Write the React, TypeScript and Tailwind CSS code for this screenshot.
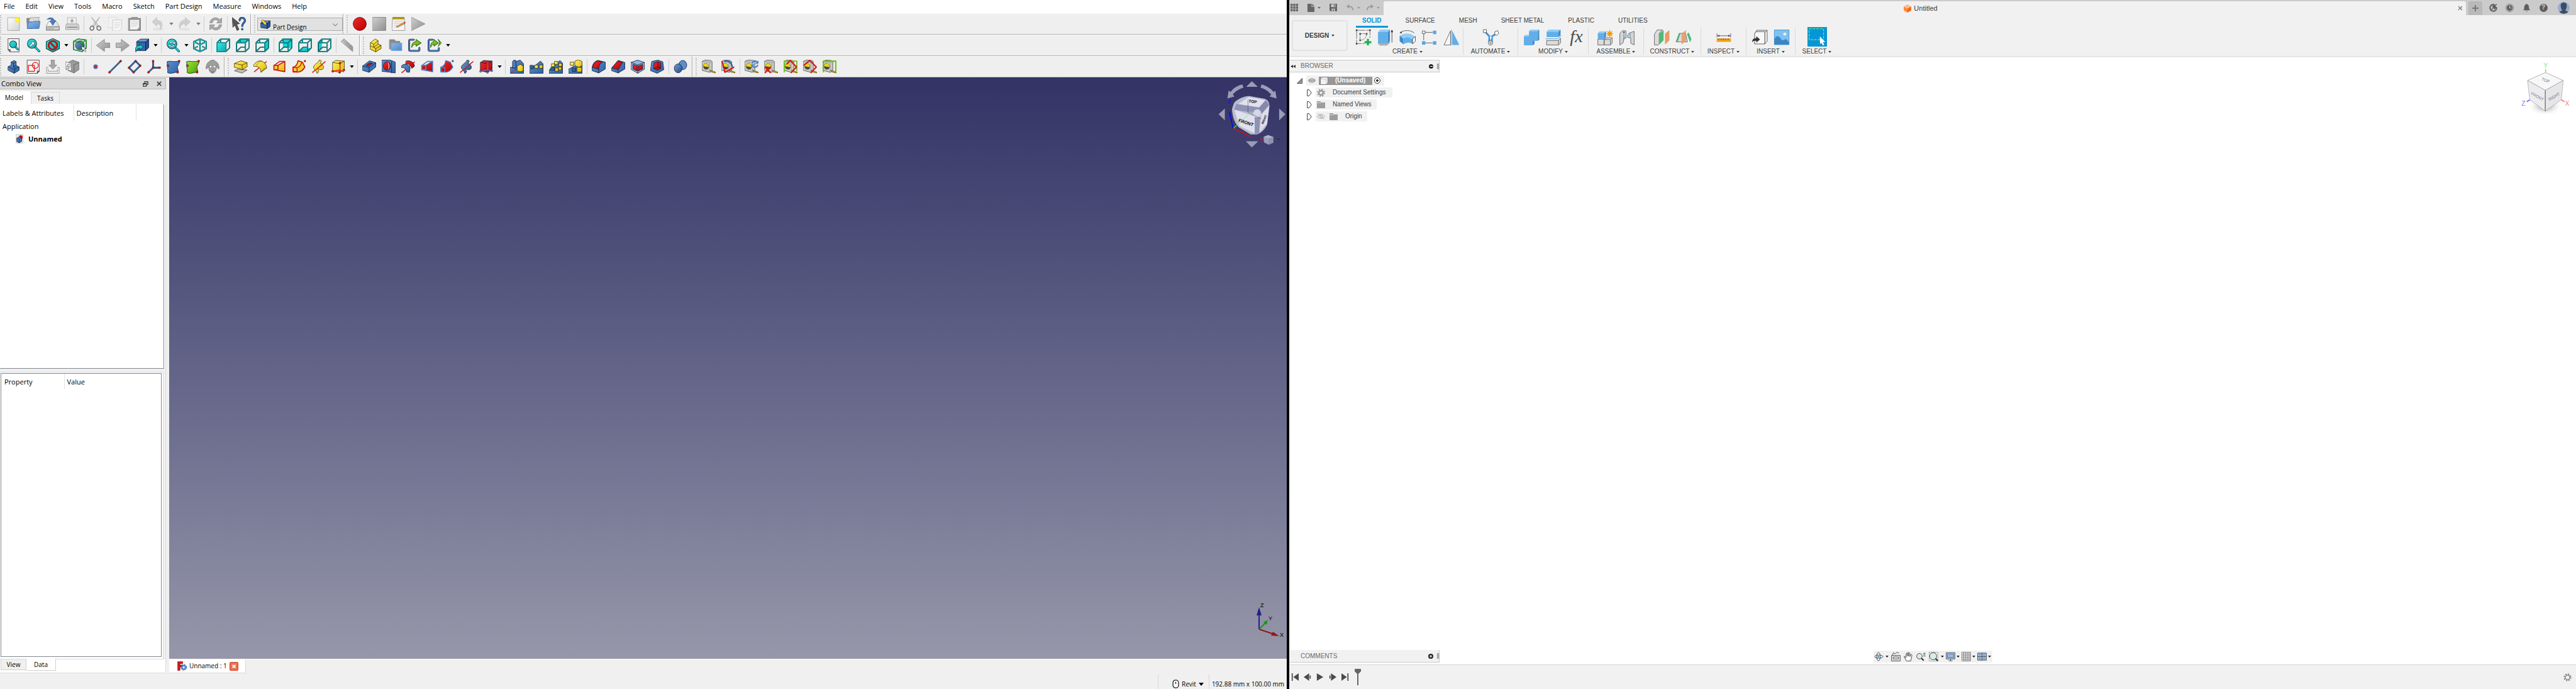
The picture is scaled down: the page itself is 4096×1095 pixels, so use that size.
import React from "react";

type Kids = { children?: React.ReactNode };
type Pt = string;

/* ---------- shared drawing helpers ---------- */

const INK = "#0b1a2e";

function Gradients() {
  const g = (id: string, a: string, b: string) => (
    <linearGradient id={id} x1="0" y1="0" x2="1" y2="1">
      <stop offset="0" stopColor={a} />
      <stop offset="1" stopColor={b} />
    </linearGradient>
  );
  return (
    <svg className="absolute size-0" aria-hidden="true">
      <defs>
        {g("blue", "#729fcf", "#204a87")}
        {g("sky", "#5b8fd0", "#2d62a8")}
        {g("yellow", "#fff36b", "#e0b800")}
        {g("red", "#f02a2a", "#b80000")}
        {g("gray", "#cfcfcf", "#8f8f8f")}
        {g("paper", "#fdfdfd", "#d2d2d2")}
        {g("teal", "#34e8ea", "#12a9ab")}
        {g("green", "#9be83a", "#4e9a06")}
        {g("folder", "#8db8ea", "#4d86c8")}
        <radialGradient id="glow">
          <stop offset="0" stopColor="#ffffc0" />
          <stop offset="0.4" stopColor="#fff200" />
          <stop offset="1" stopColor="#fff200" stopOpacity="0" />
        </radialGradient>
        <radialGradient id="shade">
          <stop offset="0" stopColor="#777" stopOpacity="0.8" />
          <stop offset="1" stopColor="#fff" stopOpacity="0" />
        </radialGradient>
      </defs>
    </svg>
  );
}

function Ic({ children }: Kids) {
  return (
    <svg viewBox="0 0 84 84" className="size-[22px] shrink-0" strokeLinejoin="round" aria-hidden="true">
      {children}
    </svg>
  );
}

function P({ d, f = "none", s = INK, w = 3 }: { d: string; f?: string; s?: string; w?: number }) {
  return <path d={d} fill={f} stroke={s} strokeWidth={w} strokeLinecap="round" />;
}

function Two({ d, s, w = 5, o = INK, e = 4 }: { d: string; s: string; w?: number; o?: string; e?: number }) {
  return (
    <g fill="none" strokeLinecap="round">
      <path d={d} stroke={o} strokeWidth={w + e} />
      <path d={d} stroke={s} strokeWidth={w} />
    </g>
  );
}

function Dot({ x, y, r = 6, f = "#e01b1b" }: { x: number; y: number; r?: number; f?: string }) {
  return <circle cx={x} cy={y} r={r} fill={f} stroke="#5a0000" strokeWidth={2} />;
}

/* ---------- FreeCAD icons ---------- */

const icons: Record<string, React.ReactNode> = {
  new: (
    <>
      <P d="M6 4H76V82H6Z" f="url(#paper)" s="#9c9c9c" />
      <circle cx="64" cy="18" r="20" fill="url(#glow)" />
    </>
  ),
  open: (
    <>
      <P d="M2 8H30L34 14V70H8Z" f="#8a8a8a" s="#777" />
      <P d="M14 26L22 4L78 2L72 34Z" f="#e8e8e8" s="#8a8a8a" />
      <P d="M22 12L70 10M20 20L70 18" s="#aaa" w={2} />
      <P d="M14 30L36 32L42 26H84L76 70H6Z" f="url(#folder)" s="#2f66a8" />
    </>
  ),
  save: (
    <>
      <P d="M18 28H64L82 58V80H2V58Z" f="url(#paper)" s="#8a8a8a" />
      <P d="M2 58H82V80H2Z" f="#b8b8b8" s="#808080" />
      <P d="M50 70H76" s="#e8e8e8" w={5} />
      <P d="M8 14C22 0 48 2 50 22H60L42 50L24 24H36C34 12 22 10 8 14Z" f="#4d80c0" s="#27518c" />
    </>
  ),
  print: (
    <>
      <P d="M14 4H66V44H14Z" f="#efefef" s="#aaa" />
      <P d="M40 34V18M32 26L40 14L48 26Z" f="#a8a8a8" s="#a8a8a8" w={6} />
      <P d="M8 42H76L82 56V76H2V56Z" f="#d5d5d5" s="#8a8a8a" />
      <P d="M12 62H72" s="#888" w={5} />
    </>
  ),
  cut: (
    <>
      <P d="M18 2L50 58L56 50ZM66 2L32 58L26 50Z" f="#e4e4e4" s="#a0a0a0" />
      <ellipse cx="20" cy="68" rx="11" ry="13" fill="none" stroke="#7c7c7c" strokeWidth="7" transform="rotate(30 20 68)" />
      <ellipse cx="62" cy="68" rx="11" ry="13" fill="none" stroke="#7c7c7c" strokeWidth="7" transform="rotate(-30 62 68)" />
    </>
  ),
  copy: (
    <>
      <P d="M2 2H56V64H2Z" f="#f2f2f2" s="#d4d4d4" />
      <P d="M28 18H82V70L68 84H28Z" f="#f6f6f6" s="#c4c4c4" />
      <P d="M38 34H72M38 44H72M38 54H72M38 64H60" s="#cfcfcf" w={3} />
    </>
  ),
  paste: (
    <>
      <P d="M6 8H78V84H6Z" f="#8f8f8f" s="#7c7c7c" />
      <P d="M14 16H70V62L58 76H14Z" f="#f4f4f4" s="#b0b0b0" w={2} />
      <P d="M26 0H58V14H26Z" f="#a0a0a0" s="#777" />
      <P d="M22 30H62M22 42H62M22 54H54" s="#b8b8b8" />
    </>
  ),
  undo: (
    <>
      <ellipse cx="44" cy="74" rx="34" ry="9" fill="#e2e2e2" />
      <P d="M36 4V20C70 20 78 50 56 76C62 52 54 42 36 42V56L8 30Z" f="#cfcfcf" s="#c2c2c2" />
    </>
  ),
  redo: (
    <>
      <ellipse cx="40" cy="74" rx="34" ry="9" fill="#e2e2e2" />
      <P d="M44 4V18C12 20 4 44 10 70C18 50 26 40 44 42V56L74 30Z" f="#cfcfcf" s="#c2c2c2" />
    </>
  ),
  refresh: (
    <>
      <P d="M6 34C12 2 50 -4 66 16L78 6V36H48L58 26C44 10 24 18 22 34Z" f="#a9a9a9" s="#858585" />
      <P d="M78 48C72 82 34 88 18 68L6 78V48H36L26 58C40 72 60 64 62 48Z" f="#a9a9a9" s="#858585" />
    </>
  ),
  whats: (
    <>
      <P d="M2 4L46 40L28 44L42 76L30 82L18 50L6 62Z" f="#555753" s="#333" />
      <Two d="M46 20C46 -2 78 2 78 22C78 38 62 36 62 54" s="#3a6cb0" w={8} />
      <circle cx="62" cy="74" r="6" fill="#3a6cb0" stroke={INK} strokeWidth="2" />
    </>
  ),
  record: <circle cx="42" cy="42" r="40" fill="url(#red)" stroke="#6b0000" strokeWidth="3" />,
  stop: <P d="M2 2H82V82H2Z" f="url(#gray)" s="#7c7c7c" />,
  macro: (
    <>
      <P d="M6 6H76L80 82H2Z" f="#f4f4f4" s="#888" />
      <P d="M8 2H74V12H8Z" f="#c4a000" s="#8f7500" />
      <P d="M14 26H68M14 38H60M14 50H44M14 62H40" s="#b5b5b5" />
      <P d="M28 58L74 32L80 40L36 62Z" f="#e39a3b" s="#7a4b10" w={2} />
      <circle cx="78" cy="34" r="5" fill="#e0362b" />
    </>
  ),
  play: <P d="M2 2L84 42L2 82Z" f="url(#gray)" s="#8a8a8a" />,

  fitAll: (
    <>
      <P d="M8 2H74V82H20L8 70Z" f="#f3f3f3" s="#333" />
      <P d="M8 68H20V82Z" f="#888" s="#333" />
      <Two d="M50 50L66 66" s="#16d0d2" w={8} />
      <circle cx="38" cy="36" r="21" fill="url(#teal)" stroke="#0b3a3c" strokeWidth="4" />
    </>
  ),
  fitSel: (
    <>
      <Two d="M54 54L78 78" s="#16d0d2" w={9} />
      <circle cx="34" cy="32" r="28" fill="url(#teal)" stroke="#0b4a4c" strokeWidth="4" />
      <P d="M18 46L34 30L26 22H48V44L40 36L24 52Z" f="#fff" w={2} />
    </>
  ),
  drawStyle: (
    <>
      <P d="M42 1L82 20V62L42 83L2 62V20Z" f="url(#teal)" s="#06383a" w={4} />
      <circle cx="42" cy="42" r="26" fill="none" stroke="#5a0000" strokeWidth="10" />
      <circle cx="42" cy="42" r="26" fill="none" stroke="#e01616" strokeWidth="7" />
      <path d="M25 25L59 59" stroke="#5a0000" strokeWidth="10" />
      <path d="M23 23L61 61" stroke="#e01616" strokeWidth="7" />
    </>
  ),
  bbox: (
    <>
      <circle cx="42" cy="42" r="28" fill="url(#blue)" stroke={INK} strokeWidth="2" />
      <Two d="M4 18L56 26V80L4 68ZM56 26L80 10V58L56 80M4 18L32 4L80 10" s="#22d422" w={4} e={2} />
      <P d="M52 48L56 74L64 68L74 82L80 78L70 64L80 62Z" f="#f4f4f4" w={2} />
    </>
  ),
  left: <P d="M2 42L50 6V28H82V56H50V78Z" f="url(#gray)" s="#7c7c7c" />,
  right: <P d="M82 42L34 6V28H2V56H34V78Z" f="url(#gray)" s="#7c7c7c" />,
  link: (
    <>
      <P d="M10 18L34 4H82L66 22H10Z" f="#6c98d4" />
      <P d="M10 22H64V74H10Z" f="#3567ae" />
      <P d="M64 22L82 4V56L64 74Z" f="#24508f" />
      <P d="M4 82C-4 54 10 40 28 44V34L48 52L28 70V60C18 58 10 64 4 82Z" f="#1fc9cb" s="#06383a" />
    </>
  ),
  sync: (
    <>
      <Two d="M54 54L78 78" s="#16d0d2" w={9} />
      <circle cx="36" cy="34" r="30" fill="url(#teal)" stroke="#0b4a4c" strokeWidth="4" />
      <P d="M20 30C24 16 44 14 50 24L56 18V34H40L46 28C40 24 32 24 28 30ZM52 40C48 54 28 56 22 46L16 52V38H32L26 42C32 48 40 46 44 40Z" f="#fff" w={2} />
    </>
  ),
  iso: <Two d="M42 4L80 20V62L42 80L4 62V20ZM4 20L42 38L80 20M42 38V80M42 4V28M14 56L26 50M70 56L58 50" s="#16d0d2" w={4} o="#06383a" />,
  ruler: (
    <>
      <P d="M2 18L18 2L72 50V80L60 70Z" f="url(#gray)" s="#888" />
      <P d="M20 8L14 16M30 16L24 24M40 24L32 34M50 34L42 42M60 42L52 52" s="#555" w={2} />
    </>
  ),
  part: (
    <>
      <P d="M8 26L36 4L54 14V34L72 42V62L40 82L8 66Z" f="url(#yellow)" s="#3a3000" />
      <P d="M8 26L28 36L54 14M28 36V54L54 34M28 54L40 62L72 42M40 62V82M8 46L28 54" s="#3a3000" />
    </>
  ),
  group: (
    <>
      <P d="M6 8H36L42 18H68V64H6Z" f="#8c8c8c" s="#777" />
      <P d="M16 28H80V74H16Z" f="url(#folder)" s="#6a9fdf" />
    </>
  ),
  linkMake: (
    <>
      <Two d="M34 8H12Q6 8 6 16V68Q6 76 14 76H60Q68 76 68 68V58" s="#4b7dc0" w={7} />
      <P d="M22 54C20 26 36 20 48 20V6L80 28L48 48V36C36 36 28 40 22 54Z" f="url(#green)" s="#173800" />
    </>
  ),
  linkMore: (
    <>
      <Two d="M30 8H12Q6 8 6 16V68Q6 76 14 76H60Q68 76 68 68V60" s="#4b7dc0" w={7} />
      <P d="M18 54C16 26 30 20 38 20V6L66 28L38 48V36C30 36 24 40 18 54Z" f="url(#green)" s="#173800" />
      <P d="M64 6L84 28L64 48L72 28Z" f="#7ad41c" s="#173800" />
    </>
  ),

  body: (
    <>
      <P d="M8 42L26 32L26 14L44 4L56 12V34L74 44V64L44 82L8 64Z" f="url(#sky)" />
      <P d="M26 14L40 22L56 12M40 22V44L56 34M40 44L50 52L74 44M50 52L44 82M8 42L44 60" />
    </>
  ),
  sketch: (
    <>
      <P d="M6 2H78V68L66 82H6Z" f="#f2f2f2" s="#333" />
      <P d="M78 68H66V82Z" f="#777" s="#333" />
      <circle cx="54" cy="34" r="18" fill="none" stroke="#e81616" strokeWidth="5" />
      <P d="M12 34H48V70H12Z" s="#e81616" w={5} />
    </>
  ),
  importIc: (
    <>
      <P d="M14 46H4V82H80V46H70M14 58V70H70V58" s="#9c9c9c" w={4} />
      <P d="M32 2H52V32H66L42 56L18 32H32Z" f="#a8a8a8" s="#7d7d7d" />
    </>
  ),
  map: (
    <>
      <P d="M18 16L44 2L84 16V58L52 80L18 66Z" f="#9b9b9b" s="#5f5f5f" />
      <P d="M52 30L84 16M52 30V80" s="#5f5f5f" />
      <P d="M2 12L36 22V68L2 58Z" f="#ededed" s="#777" />
      <circle cx="22" cy="36" r="9" fill="none" stroke="#999" strokeWidth="4" />
      <P d="M8 38H20V54H8Z" s="#999" w={4} />
    </>
  ),
  point: (
    <>
      <circle cx="42" cy="42" r="14" fill="#4b7dc0" />
      <circle cx="42" cy="42" r="8" fill="#e81616" />
    </>
  ),
  line: (
    <>
      <Two d="M8 76L76 8" s="#3f74bb" w={6} />
      <Dot x={8} y={76} />
      <Dot x={76} y={8} />
    </>
  ),
  plane: (
    <>
      <Two d="M48 8L76 36L36 76L8 48Z" s="#3f74bb" w={6} />
      <Dot x={48} y={8} />
      <Dot x={76} y={36} />
      <Dot x={36} y={76} />
      <Dot x={8} y={48} />
    </>
  ),
  cs: (
    <>
      <Two d="M36 8V48H76M36 48L8 76" s="#3f74bb" w={6} />
      <Dot x={36} y={8} />
      <Dot x={76} y={48} />
      <Dot x={8} y={76} />
      <Dot x={36} y={48} />
    </>
  ),
  binder: (
    <>
      <P d="M4 12C20 2 40 18 76 6C84 24 60 40 66 50L72 76C50 72 28 90 6 78C10 60 0 40 4 12Z" f="url(#sky)" />
      <Dot x={76} y={8} />
      <Dot x={8} y={36} />
      <Dot x={66} y={76} />
    </>
  ),
  subBinder: (
    <>
      <P d="M4 12C20 2 40 18 76 6C84 24 60 40 66 50L72 76C50 72 28 90 6 78C10 60 0 40 4 12Z" f="url(#green)" />
      <Dot x={76} y={8} />
      <Dot x={8} y={36} />
      <Dot x={66} y={76} />
    </>
  ),
  clone: (
    <>
      <P d="M22 12C28 -2 56 -2 62 12C74 14 82 34 82 54C72 58 68 42 64 34C68 54 62 80 42 82C22 80 16 54 20 34C16 42 12 58 2 54C2 34 10 14 22 12Z" f="#9e9e9e" s="#777" />
      <circle cx="30" cy="42" r="5" fill="#fff" />
      <circle cx="54" cy="42" r="5" fill="#fff" />
      <P d="M34 70L42 76L50 70" s="#555" />
    </>
  ),
  pad: (
    <>
      <P d="M4 66L28 56L80 62L50 80Z" f="#bdbdbd" s="#444" />
      <P d="M4 22L42 6L80 18V42L50 60L4 46Z" f="url(#yellow)" s="#3a3000" />
      <P d="M4 22L50 32L80 18M50 32V60" s="#3a3000" />
    </>
  ),
  revolution: (
    <>
      <path d="M4 74L80 10" stroke="#e01b1b" strokeWidth="6" />
      <P d="M2 30C20 8 34 4 50 8C66 14 80 30 80 50L46 76C44 50 28 36 2 40Z" f="url(#yellow)" s="#3a3000" />
      <P d="M50 8C30 12 24 20 20 34M46 76C52 60 64 54 80 50" s="#3a3000" w={2} />
    </>
  ),
  loft: (
    <>
      <P d="M30 34L72 10V72L8 60Z" f="url(#yellow)" s="#c01010" w={6} />
      <P d="M6 34H30V60H6Z" f="#f3dc2a" s="#e01b1b" w={7} />
      <P d="M8 34L40 10H72" s="#e01b1b" w={6} />
    </>
  ),
  pipe: (
    <>
      <P d="M2 46C28 40 30 20 34 6L60 14L76 44C60 70 40 76 28 74L4 70Z" f="url(#yellow)" s="#c01010" w={6} />
      <P d="M4 48H28V74H4ZM28 48C44 44 54 30 56 14" s="#e01b1b" w={6} />
      <Dot x={76} y={8} r={5} />
    </>
  ),
  helix: (
    <>
      <path d="M2 78L82 10" stroke="#e01b1b" strokeWidth="6" />
      <P d="M44 4C58 0 62 8 50 22C74 30 78 56 58 60C46 62 40 54 34 54C44 66 44 78 30 82C26 60 12 62 10 46C10 28 36 22 44 4Z" f="url(#yellow)" s="#3a3000" />
      <path d="M22 62L62 28" stroke="#e01b1b" strokeWidth="6" />
    </>
  ),
  addPrim: (
    <>
      <P d="M8 16L26 4L78 8V58L52 76L8 68Z" f="url(#yellow)" s="#3a3000" />
      <P d="M8 16L52 24L78 8M52 24V76" s="#3a3000" />
      <path d="M52 20V62L8 70M52 62L76 74" stroke="#e01b1b" strokeWidth="5" fill="none" />
      <Dot x={52} y={20} />
      <Dot x={8} y={70} />
      <Dot x={50} y={76} />
      <Dot x={76} y={62} />
    </>
  ),
  pocket: (
    <>
      <P d="M2 38L44 6L82 18V44L42 76L2 64Z" f="url(#sky)" />
      <P d="M2 38L42 48L82 18M42 48V76" />
      <P d="M24 34L46 18L62 22L40 38Z" f="#d01010" />
    </>
  ),
  hole: (
    <>
      <P d="M2 2H52L82 14V80L52 76L2 70Z" f="url(#sky)" />
      <P d="M60 10V80" />
      <ellipse cx="32" cy="38" rx="22" ry="26" fill="url(#red)" stroke={INK} strokeWidth="3" />
      <path d="M34 14C48 20 50 52 36 62C44 50 44 26 34 14Z" fill="#fff" />
    </>
  ),
  groove: (
    <>
      <path d="M2 80L82 12" stroke="#e01b1b" strokeWidth="6" />
      <P d="M30 8C56 0 82 20 80 40L64 52C56 30 44 24 28 26Z" f="url(#red)" />
      <P d="M2 36C24 18 46 30 54 50L50 76L32 74C30 56 20 46 2 48Z" f="url(#sky)" />
    </>
  ),
  subLoft: (
    <>
      <P d="M30 34L72 10V72L8 60Z" f="url(#red)" s="#3f74bb" w={6} />
      <P d="M6 34H30V60H6Z" f="#d01010" s="#4b83cc" w={7} />
      <P d="M8 34L40 10H72" s="#4b83cc" w={6} />
    </>
  ),
  subPipe: (
    <>
      <P d="M2 46C28 40 30 20 34 6L60 14L76 44C60 70 40 76 28 74L4 70Z" f="url(#red)" s="#3f74bb" w={6} />
      <P d="M4 48H28V74H4Z" f="#c01010" s="#4b83cc" w={6} />
      <Dot x={76} y={8} r={5} f="#3f74bb" />
    </>
  ),
  subHelix: (
    <>
      <path d="M2 78L82 10" stroke="#e01b1b" strokeWidth="6" />
      <P d="M44 4C58 0 62 8 50 22C74 30 78 56 58 60C46 62 40 54 34 54C44 66 44 78 30 82C26 60 12 62 10 46C10 28 36 22 44 4Z" f="url(#blue)" />
      <path d="M22 62L62 28" stroke="#e01b1b" strokeWidth="6" />
    </>
  ),
  subPrim: (
    <>
      <P d="M8 16L26 4L78 8V58L52 76L8 68Z" f="url(#red)" />
      <P d="M8 16L52 24L78 8M52 24V76" />
      <path d="M52 20V62L8 70M52 62L76 70" stroke="#4b83cc" strokeWidth="5" fill="none" />
      <Dot x={52} y={20} f="#5b8fd0" />
      <Dot x={8} y={70} f="#5b8fd0" />
      <Dot x={50} y={76} f="#5b8fd0" />
      <Dot x={76} y={66} f="#5b8fd0" />
    </>
  ),
  mirrored: (
    <>
      <P d="M2 46H20V10C24 0 34 0 38 10L62 2L82 24V82H2Z" f="url(#sky)" />
      <path d="M8 78L80 20" stroke="#e01b1b" strokeWidth="6" strokeDasharray="14 8" />
      <P d="M16 10C20 0 32 0 36 10V50H16Z" f="#4b7dc0" />
      <P d="M44 38L62 28L80 38V66C70 74 54 74 44 66Z" f="url(#yellow)" s="#3a3000" />
    </>
  ),
  linear: (
    <>
      <P d="M2 60L40 30L66 8L82 24V82H2Z" f="url(#sky)" />
      <P d="M4 34H24V54H4Z" f="#3465a4" />
      <P d="M32 32H52V52H32ZM60 32H80V52H60Z" f="url(#yellow)" s="#3a3000" />
    </>
  ),
  polar: (
    <>
      <P d="M2 60L40 30L66 4L82 20V82H2Z" f="url(#sky)" />
      <P d="M34 10H54V28H34ZM16 24H34V42H16ZM60 22H78V40H60ZM58 44H76V62H58ZM38 50H56V70H38Z" f="url(#yellow)" s="#3a3000" />
      <P d="M12 46H32V64H12Z" f="#3465a4" />
    </>
  ),
  multi: (
    <>
      <P d="M2 56L30 40L82 30V82H2Z" f="url(#sky)" />
      <P d="M40 8L60 0L82 10V36L62 46L40 36Z" f="url(#yellow)" s="#3a3000" />
      <P d="M12 14H32V34H12ZM52 46H80V74H52Z" f="url(#yellow)" s="#3a3000" />
      <P d="M24 50H44V70H24Z" f="#3465a4" />
    </>
  ),
  fillet: (
    <>
      <P d="M2 50C4 24 18 8 38 4L82 14V56L42 80L2 66Z" f="url(#sky)" />
      <P d="M4 46C8 22 20 10 38 6L66 14C50 22 42 34 42 56Z" f="url(#red)" />
      <P d="M42 56L42 80" />
    </>
  ),
  chamfer: (
    <>
      <P d="M2 50L42 4L82 16V56L42 80L2 66Z" f="url(#sky)" />
      <P d="M4 50L40 6L68 16L42 58Z" f="url(#red)" />
      <P d="M42 58V80" />
    </>
  ),
  draft: (
    <>
      <P d="M2 16L42 2L82 16V58L42 82L2 58Z" f="#8fb7e6" />
      <P d="M2 16L42 32L82 16M42 32V82" />
      <P d="M14 28L38 38V68L14 56Z M46 38L72 28V56L46 68Z" f="url(#red)" />
    </>
  ),
  thickness: (
    <>
      <P d="M10 10L46 2L76 12L82 60L42 82L2 66Z" f="url(#sky)" />
      <P d="M24 18L46 12L64 18V52L44 64L22 54Z" f="url(#red)" />
      <P d="M46 12V44L22 54M46 44L64 52" />
    </>
  ),
  boolean: (
    <>
      <ellipse cx="56" cy="32" rx="24" ry="28" fill="#5b8fd0" stroke={INK} strokeWidth="3" />
      <ellipse cx="28" cy="52" rx="24" ry="27" fill="url(#blue)" stroke={INK} strokeWidth="3" />
    </>
  ),
};

function CubeWire({ face }: { face: Pt }) {
  return (
    <>
      <path d={face} fill="#16cfd1" />
      <Two d="M4 26H58V80H4ZM26 4H80V58M4 26L26 4M58 26L80 4M58 80L80 58M26 4V24M30 54H56M8 76L26 58" s="#16cfd1" w={3} o="#06383a" />
    </>
  );
}
icons.front = (
  <>
    <CubeWire face="M4 26H58V80H4Z" />
    <path d="M6 28H56V78H6Z" fill="url(#teal)" />
  </>
);
icons.top = <CubeWire face="M4 26L26 4H80L58 26Z" />;
icons.rightV = <CubeWire face="M58 26L80 4V58L58 80Z" />;
icons.rear = <CubeWire face="M26 4H80V58H26Z" />;
icons.bottom = <CubeWire face="M4 80L26 58H80L58 80Z" />;
icons.leftV = <CubeWire face="M4 26L26 4V58L4 80Z" />;

function Tape({ children }: Kids) {
  return (
    <>
      <P d="M2 10L18 2L54 4L62 12V68L46 76L2 64Z" f="#c9ccc6" s="#444" />
      <P d="M46 16V76M2 10L46 16L62 12" s="#777" w={2} />
      <path d="M8 40C8 14 42 14 42 46Z" fill="#f5d60a" stroke="#444" strokeWidth="2" />
      <path d="M8 40L42 46C40 66 10 64 8 40Z" fill="#454742" />
      <P d="M50 64L82 74V80L58 74Z" f="#edd400" s="#4a3d00" />
      {children}
    </>
  );
}
icons.mLinear = <Tape />;
icons.mAngular = (
  <Tape>
    <path d="M4 8L22 76L78 44" stroke="#d91414" strokeWidth="8" fill="none" />
    <path d="M18 10C44 0 64 20 66 44" stroke="#2f62ad" strokeWidth="9" fill="none" />
  </Tape>
);
icons.mRefresh = (
  <Tape>
    <path d="M46 22C52 2 72 4 76 18M80 30C74 50 54 48 48 36" stroke="#4b83cc" strokeWidth="8" fill="none" />
    <path d="M84 4V24H64ZM42 44V28H60Z" fill="#4b83cc" />
  </Tape>
);
icons.mClear = (
  <Tape>
    <path d="M4 44L40 80M40 44L4 80" stroke="#d91414" strokeWidth="9" />
  </Tape>
);
icons.mAll = (
  <Tape>
    <path d="M4 76V8H80V68" stroke="#6cc513" strokeWidth="7" fill="none" />
    <path d="M18 28L40 4L78 44L44 80" stroke="#d91414" strokeWidth="8" fill="none" />
  </Tape>
);
icons.m3d = (
  <Tape>
    <path d="M4 34L40 4L80 44L46 80" stroke="#d91414" strokeWidth="8" fill="none" />
  </Tape>
);
icons.mDelta = (
  <Tape>
    <path d="M5 76V8H80V76" stroke="#6cc513" strokeWidth="8" fill="none" />
  </Tape>
);

/* ---------- FreeCAD toolbars ---------- */

function Tool({ name, label }: { name: string; label?: string }) {
  return (
    <button aria-label={label ?? name} className="flex h-full w-[31px] items-center justify-center">
      <Ic>{icons[name]}</Ic>
    </button>
  );
}
const Tools = ({ names }: { names: string[] }) => (
  <>
    {names.map((n) => (
      <Tool key={n} name={n} />
    ))}
  </>
);
const Sep = () => (
  <div className="flex h-6 w-[6px] justify-center">
    <div className="w-px bg-[#cdcdcd]" />
  </div>
);
const Arrow = ({ dim }: { dim?: boolean }) => (
  <button aria-label="More" className="flex h-full w-3 items-center justify-center">
    <svg viewBox="0 0 8 5" className="h-1 w-[7px]" aria-hidden="true">
      <path d="M0 0H8L4 5Z" fill={dim ? "#777" : "#000"} />
    </svg>
  </button>
);
const Handle = () => <div className="h-7 w-[6px] border-l-2 border-dotted border-[#c4c4c4]" />;
const Edge = () => (
  <div className="flex h-full w-[11px] items-center gap-1">
    <div className="h-full w-[2px] border-r border-l border-r-white border-l-[#a8a8a8]" />
    <div className="h-7 border-l-2 border-dotted border-[#c4c4c4]" />
  </div>
);
const Bar = ({ children }: Kids) => (
  <div className="flex h-[34px] items-center border-t border-b border-t-[#fafafa] border-b-[#b2b2b2] bg-[#efefef]">{children}</div>
);

function FreeCadBars() {
  return (
    <>
      <nav className="flex h-[21px] items-center gap-[17px] bg-white pl-[6px] text-[11px]">
        {["File", "Edit", "View", "Tools", "Macro", "Sketch", "Part Design", "Measure", "Windows", "Help"].map((m) => (
          <button key={m}>{m}</button>
        ))}
      </nav>
      <Bar>
        <Handle />
        <Tools names={["new", "open", "save", "print"]} />
        <Sep />
        <Tools names={["cut", "copy", "paste"]} />
        <Sep />
        <Tool name="undo" />
        <Arrow dim />
        <Tool name="redo" />
        <Arrow dim />
        <Sep />
        <Tool name="refresh" />
        <Sep />
        <Tool name="whats" label="What's this" />
        <div className="w-[3px]" />
        <Edge />
        <div className="relative h-[21px] w-[136px] border border-[#adadad] bg-[#e1e1e1]">
          <svg viewBox="0 0 60 56" className="pointer-events-none absolute top-[2px] left-1 h-[15px] w-4" aria-hidden="true">
            <P d="M4 20L20 8H58L44 22H4Z" f="#6c98d4" />
            <P d="M4 22H42V54L4 48Z" f="#3567ae" />
            <P d="M42 22L58 8V42L42 54Z" f="#24508f" />
            <P d="M6 6L16 2L36 22L34 32L24 30Z" f="#f2dc3a" s="#3a3000" w={2} />
          </svg>
          <select aria-label="Workbench" className="h-full w-full appearance-none bg-transparent pl-6 text-[10px] leading-4">
            <option>Part Design</option>
          </select>
          <svg viewBox="0 0 10 6" className="pointer-events-none absolute top-2 right-[7px] h-[5px] w-2" aria-hidden="true">
            <path d="M0.5 0.5L5 5L9.5 0.5" fill="none" stroke="#333" />
          </svg>
        </div>
        <Edge />
        <Tools names={["record", "stop", "macro", "play"]} />
      </Bar>
      <Bar>
        <Handle />
        <Tools names={["fitAll", "fitSel", "drawStyle"]} />
        <Arrow />
        <Tool name="bbox" />
        <Sep />
        <Tools names={["left", "right", "link"]} />
        <Arrow />
        <Sep />
        <Tool name="sync" />
        <Arrow />
        <Tool name="iso" />
        <Sep />
        <Tools names={["front", "top", "rightV"]} />
        <Sep />
        <Tools names={["rear", "bottom", "leftV"]} />
        <Sep />
        <Tool name="ruler" />
        <div className="w-[3px]" />
        <Edge />
        <Tools names={["part", "group", "linkMake", "linkMore"]} />
        <Arrow />
      </Bar>
      <Bar>
        <Handle />
        <Tools names={["body", "sketch", "importIc", "map"]} />
        <Sep />
        <Tools names={["point", "line", "plane", "cs", "binder", "subBinder", "clone"]} />
        <div className="w-[3px]" />
        <Edge />
        <Tools names={["pad", "revolution", "loft", "pipe", "helix", "addPrim"]} />
        <Arrow />
        <Sep />
        <Tools names={["pocket", "hole", "groove", "subLoft", "subPipe", "subHelix", "subPrim"]} />
        <Arrow />
        <Sep />
        <Tools names={["mirrored", "linear", "polar", "multi"]} />
        <Sep />
        <Tools names={["fillet", "chamfer", "draft", "thickness"]} />
        <Sep />
        <Tool name="boolean" />
        <div className="w-[3px]" />
        <Edge />
        <Tools names={["mLinear", "mAngular"]} />
        <Sep />
        <Tools names={["mRefresh", "mClear", "mAll", "m3d", "mDelta"]} />
      </Bar>
    </>
  );
}

function ComboView() {
  return (
    <aside className="flex w-[264px] shrink-0 flex-col text-[11px]">
      <div className="mt-px flex h-[18px] items-center border border-l-0 border-[#b8b8b8] bg-[#d9d9d9] pl-[2px]">
        <span className="flex-1">Combo View</span>
        <button aria-label="Float" className="flex w-[21px] justify-center">
          <svg viewBox="0 0 11 11" className="size-[9px]" aria-hidden="true">
            <path d="M3.5 3V1H10V6.500H8M3.500 1.500H10M1 4.500H7V10H1ZM1 5.500H7" fill="none" stroke="#333" strokeWidth="1.500" />
          </svg>
        </button>
        <button aria-label="Close" className="flex w-[21px] justify-center">
          <svg viewBox="0 0 10 10" className="size-2" aria-hidden="true">
            <path d="M1 1L9 9M9 1L1 9" stroke="#333" strokeWidth="2" />
          </svg>
        </button>
      </div>
      <div className="flex h-[23px] items-end pr-px text-[10px]">
        <button className="h-5 w-[49px] bg-white pr-1">Model</button>
        <button className="h-[19px] w-[46px] border border-b-0 border-[#d9d9d9] bg-[#f0f0f0]">Tasks</button>
      </div>
      <div className="flex min-h-0 flex-1 flex-col border-r border-b border-[#dcdcdc] bg-white">
        <div className="mt-px mr-[2px] h-[420px] border-r border-b border-[#828790] leading-none">
          <table className="w-[217px] table-fixed border-collapse text-left">
            <thead>
              <tr className="h-[26px]">
                <th className="w-[117px] border-r border-[#e2e2e2] pl-1 font-normal whitespace-nowrap">Labels &amp; Attributes</th>
                <th className="border-r border-[#e2e2e2] pl-1 font-normal">Description</th>
              </tr>
            </thead>
            <tbody>
              <tr className="h-[17px]">
                <td className="pl-1">Application</td>
                <td />
              </tr>
              <tr className="h-[22px]">
                <td className="pl-[25px] font-bold">
                  <div className="flex items-center gap-2">
                    <svg viewBox="0 0 48 56" className="h-[15px] w-3" aria-hidden="true">
                      <path d="M1 1H47V55H1Z" fill="#e8e8e8" stroke="#999" strokeWidth="2" />
                      <circle cx="32" cy="18" r="12" fill="#d91414" />
                      <P d="M8 24L22 16L38 22V44L22 54L8 46Z" f="url(#sky)" />
                      <P d="M8 24L22 30L38 22M22 30V54" w={2} />
                    </svg>
                    Unnamed
                  </div>
                </td>
                <td />
              </tr>
            </tbody>
          </table>
        </div>
        <div className="flex min-h-0 flex-1 flex-col bg-[#f0f0f0] pt-[5px] pr-[3px]">
          <div className="flex min-h-0 flex-1 flex-col border border-l-0 border-[#dcdcdc] bg-white p-px pr-[2px] pb-[3px]">
            <div className="flex-1 border border-[#828790]">
              <table className="w-full table-fixed border-collapse text-left leading-none">
                <thead>
                  <tr className="h-[24px]">
                    <th className="w-[100px] border-r border-[#e2e2e2] pl-[5px] font-normal">Property</th>
                    <th className="pl-1 font-normal">Value</th>
                  </tr>
                </thead>
              </table>
            </div>
          </div>
        </div>
        <div className="flex h-[21px] items-start bg-white pl-px text-[10px] leading-none">
          <button className="h-[17px] w-[41px] border border-t-0 border-[#d0d0d0] bg-[#f0f0f0]">View</button>
          <button className="-mt-px h-[19px] w-[47px] border border-t-0 border-l-0 border-[#d0d0d0] bg-white">Data</button>
        </div>
      </div>
    </aside>
  );
}

function NavCube() {
  return (
    <svg viewBox="100 50 416 420" className="absolute top-[2px] right-0 h-[112px] w-[111px]" fontFamily="Liberation Sans, sans-serif" aria-label="Navigation cube">
      <g fill="#9c9cb8">
        <path d="M308 65L344 99H274Z" />
        <path d="M308 460L346 423H272Z" />
        <path d="M110 262L147 228V298Z" />
        <path d="M508 262L471 228V298Z" />
        <path d="M252 85C220 92 198 108 180 130L170 120L162 168L205 156L194 145C210 124 230 112 258 104Z" />
        <path d="M365 85C397 92 424 112 438 130L448 122L456 168L413 156L424 145C405 124 390 112 360 104Z" />
      </g>
      <path d="M200 200C210 175 270 150 300 155L385 170C405 178 414 195 413 215L400 320C390 350 360 378 335 383L300 382L230 340C200 310 190 260 190 230Z" fill="#b9bccf" />
      <path d="M222 205L290 160L390 178L352 222Z" fill="#e0e0ee" />
      <path d="M203 235L325 275V376L235 332Z" fill="#e0e0ee" />
      <path d="M365 262L412 212L398 318L352 372Z" fill="#dcdcec" />
      <path d="M215 200L352 222L365 262L203 235Z" fill="#8f93b3" />
      <path d="M352 222L390 178L412 205L365 262Z" fill="#8589ab" />
      <path d="M325 278L358 262L352 376L325 380Z" fill="#8f93b3" />
      <circle cx="340" cy="257" r="24" fill="#d5d7e8" />
      <path d="M285 175V250L365 290" stroke="#333377" strokeWidth="2" fill="none" />
      <text x="288" y="192" fontSize="24" fontWeight="bold" transform="rotate(6 288 192)">TOP</text>
      <text x="226" y="306" fontSize="27" fontWeight="bold" transform="rotate(18 226 306)">FRONT</text>
      <text x="376" y="322" fontSize="18" fontWeight="bold" transform="rotate(-66 376 322)">RIGHT</text>
      <path d="M196 345L174 246" stroke="#0000ff" strokeWidth="5" />
      <path d="M200 347L298 396" stroke="#ff0000" strokeWidth="5" />
      <path d="M200 345L215 330" stroke="#00ff00" strokeWidth="6" />
      <path d="M215 330L285 268" stroke="#7fe07f" strokeWidth="3" />
      <text x="166" y="195" fontSize="28" fill="#0000ff">Z</text>
      <text x="292" y="264" fontSize="26" fill="#7fe07f">Y</text>
      <text x="352" y="422" fontSize="28" fill="#ff0000">X</text>
      <path d="M378 397L405 387L436 398V432L408 444L380 430Z" fill="#9c9fba" />
      <path d="M378 397L408 406L436 398L405 387Z" fill="#b2b4cc" />
      <path d="M408 406V444L436 432V398Z" fill="#8c8fae" />
      <path d="M452 406H482L468 419Z" fill="#303054" />
    </svg>
  );
}

function Triad() {
  return (
    <svg viewBox="0 0 56 66" className="absolute right-1 bottom-[33px] h-[66px] w-[56px]" fontFamily="Liberation Sans, sans-serif" fontSize="9" aria-label="Axis cross">
      <path d="M16 52V22" stroke="#20208c" strokeWidth="2" />
      <path d="M16 17L20 30H12Z" fill="#20208c" />
      <path d="M16 52L26 42" stroke="#209020" strokeWidth="2" />
      <path d="M30 37L28 45L23 41Z" fill="#209020" />
      <path d="M16 52L40 60" stroke="#901818" strokeWidth="2" />
      <path d="M48 63L35 62L38 56Z" fill="#901818" />
      <text x="18" y="17">Z</text>
      <text x="31" y="38">Y</text>
      <text x="49" y="64">X</text>
    </svg>
  );
}

function FreeCad() {
  return (
    <section className="flex min-w-0 flex-1 flex-col bg-[#f0f0f0] font-['Open_Sans',sans-serif] text-black">
      <FreeCadBars />
      <div className="flex min-h-0 flex-1">
        <ComboView />
        <div className="ml-[5px] flex min-w-0 flex-1 flex-col">
          <div className="relative flex-1 bg-linear-to-b from-[#333365] to-[#9797aa]">
            <NavCube />
            <Triad />
          </div>
          <div className="flex h-[23px] border-t border-white">
            <div className="flex w-[122px] items-center border-r border-b border-[#d9d9d9] bg-white pl-[13px] text-[10px]">
              <svg viewBox="0 0 56 56" className="size-[15px]" aria-hidden="true">
                <path d="M2 2H32V14H16V22H28V34H16V54H2Z" fill="#d01818" stroke="#7a0000" strokeWidth="2" />
                <circle cx="38" cy="36" r="12" fill="none" stroke="#1d3f73" strokeWidth="12" strokeDasharray="6 3.400" />
                <circle cx="38" cy="36" r="10" fill="none" stroke="#5b8fd0" strokeWidth="8" />
              </svg>
              <span className="ml-1">Unnamed : 1</span>
              <button aria-label="Close document" className="ml-1 flex size-[14px] items-center justify-center rounded-[2px] border border-[#d8402a] bg-[#e8734e]">
                <svg viewBox="0 0 10 10" className="size-2" aria-hidden="true">
                  <path d="M2 2L8 8M8 2L2 8" stroke="#fff" strokeWidth="2.500" />
                </svg>
              </button>
            </div>
          </div>
        </div>
      </div>
      <footer className="flex h-[25px] items-end justify-end text-[10px] leading-none">
        <div className="flex h-[23px] w-[81px] items-center justify-end border-l border-[#d7d7d7] pt-[7px] pr-2">
          <svg viewBox="0 0 12 16" className="h-[14px] w-[11px]" aria-hidden="true">
            <rect x="1" y="1" width="10" height="14" rx="4.500" fill="#fff" stroke="#222" strokeWidth="1.500" />
            <path d="M6 4V8" stroke="#222" strokeWidth="1.500" />
          </svg>
          <button title="Navigation style" className="ml-1 flex items-center gap-1">
            Revit
            <svg viewBox="0 0 8 5" className="h-[5px] w-2" aria-hidden="true">
              <path d="M0 0H8L4 5Z" />
            </svg>
          </button>
        </div>
        <div className="flex h-[23px] items-center border-l border-[#d7d7d7] pt-[7px] pr-1 pl-1 whitespace-nowrap">192.88 mm x 100.00 mm</div>
      </footer>
    </section>
  );
}

/* ---------- Fusion ---------- */

const Caret = ({ c = "#3c3c3c" }: { c?: string }) => (
  <svg viewBox="0 0 8 5" className="h-[3px] w-[5px]" aria-hidden="true">
    <path d="M0 0H8L4 5Z" fill={c} />
  </svg>
);

const R = ({ children }: Kids) => (
  <svg viewBox="0 0 96 96" className="size-[26px] overflow-visible" strokeLinejoin="round" aria-hidden="true">
    {children}
  </svg>
);

const fusion: Record<string, React.ReactNode> = {
  sketch: (
    <>
      <path d="M8 8H86V52M8 8V86H54" fill="none" stroke="#555" strokeWidth="3" strokeDasharray="50 6" />
      <path d="M28 28H66M28 28V66M66 30C66 50 50 66 32 66" fill="none" stroke="#555" strokeWidth="3" strokeDasharray="14 4" />
      <path d="M3 3h9v9h-9zM82 3h9v9h-9zM3 82h9v9h-9zM24 24h9v9h-9zM62 24h9v9h-9zM24 62h9v9h-9z" fill="#444" />
      <path d="M68 58H80V72H94V84H80V96H68V84H54V72H68Z" fill="#1fae4c" />
    </>
  ),
  extrude: (
    <>
      <path d="M4 88L16 98H56L74 82V74H4Z" fill="#b0b0b0" />
      <path d="M4 18L18 4H74L62 18Z" fill="#8fcdf7" />
      <path d="M4 18H62V84H4Z" fill="#62aee8" />
      <path d="M62 18L74 4V70L62 84Z" fill="#3e8ac8" />
      <path d="M86 80V14M81 18L86 6L91 18Z" stroke="#333" strokeWidth="3" fill="#333" />
    </>
  ),
  revolve: (
    <>
      <path d="M4 22C26 6 64 4 88 24" fill="none" stroke="#444" strokeWidth="3" />
      <path d="M2 24L14 14V26Z" fill="#333" />
      <path d="M2 40C30 20 66 22 94 46L80 62C60 46 40 46 24 56Z" fill="#8fcdf7" />
      <path d="M2 40L24 56V90L2 72Z" fill="#3e8ac8" />
      <path d="M24 56C40 46 60 46 78 62V88C62 76 40 78 24 90Z" fill="#62aee8" />
      <path d="M78 58L94 44V72L78 88Z" fill="#fff" stroke="#333" strokeWidth="3" />
    </>
  ),
  pattern: (
    <>
      <path d="M24 20H66M14 30V66M24 82H66" stroke="#444" strokeWidth="3" />
      <path d="M6 12H22V28H6Z" fill="#fff" stroke="#444" strokeWidth="3" />
      <path d="M68 10H88V30H68ZM4 72H24V92H4ZM68 72H88V92H68Z" fill="#53a8e8" />
    </>
  ),
  mirror: (
    <>
      <path d="M42 12V94H4Z" fill="#f6f6f6" stroke="#555" strokeWidth="3" />
      <path d="M47 4V96" stroke="#555" strokeWidth="2" />
      <path d="M52 10L94 94H52Z" fill="#62aee8" />
    </>
  ),
  automate: (
    <>
      <path d="M16 16L42 44L40 76H56L56 44L82 28" fill="none" stroke="#3e95dc" strokeWidth="11" />
      <path d="M42 46H56L50 62Z" fill="#fff" />
      <path d="M6 4H24V22H6Z" fill="#fff" stroke="#444" strokeWidth="3" />
      <path d="M74 16L90 10L96 26L84 38L72 30Z" fill="#fff" stroke="#444" strokeWidth="3" />
      <circle cx="48" cy="82" r="13" fill="#fff" stroke="#444" strokeWidth="3" />
      <circle cx="48" cy="82" r="5" fill="none" stroke="#444" strokeWidth="3" />
    </>
  ),
  presspull: (
    <>
      <path d="M34 14L42 4H94L86 14V58L94 48V62L84 70H66V88L56 96H4V44L12 36H34Z" fill="#62aee8" />
      <path d="M34 14L42 4H94L86 14ZM4 44L12 36H34V44Z" fill="#8fcdf7" />
      <path d="M86 14L94 4V62L86 70ZM58 70H66V88L56 96V72Z" fill="#3e8ac8" />
    </>
  ),
  split: (
    <>
      <path d="M8 16L20 4H90L78 16Z" fill="#8fcdf7" />
      <path d="M8 16H78V48H8Z" fill="#62aee8" />
      <path d="M78 16L90 4V36L78 48Z" fill="#3e8ac8" />
      <path d="M2 58H76L94 38" fill="none" stroke="#1b8fe0" strokeWidth="3" />
      <path d="M8 68H78V94H8ZM78 68L90 54V82L78 94" fill="#dcdcdc" stroke="#555" strokeWidth="3" />
    </>
  ),
  fx: (
    <text x="16" y="78" fontFamily="Liberation Serif, serif" fontStyle="italic" fontSize="104" fill="#4a4a4a">
      fx
    </text>
  ),
  assemble: (
    <>
      <path d="M6 60H42V94H6ZM46 62L56 52H90V84L80 94H44V62H80L90 52M80 62V94" fill="#dcdcdc" stroke="#555" strokeWidth="3" />
      <path d="M6 24L16 14H54L44 24Z" fill="#8fcdf7" />
      <path d="M6 24H44V60H6Z" fill="#62aee8" />
      <path d="M44 24L54 14V48L44 60Z" fill="#3e8ac8" />
      <path d="M76 2L81 18L94 10L86 23L98 28L86 33L94 46L81 38L76 54L71 38L58 46L66 33L54 28L66 23L58 10L71 18Z" fill="#f39c12" />
    </>
  ),
  joint: (
    <>
      <path d="M6 94V30C10 16 22 8 34 10L42 12V54H30L26 80Z" fill="#d6d6d6" stroke="#555" strokeWidth="3" />
      <path d="M90 94V14L62 24C52 30 50 40 52 50L70 52V84Z" fill="#d6d6d6" stroke="#555" strokeWidth="3" />
      <path d="M30 64V30M66 46V26" stroke="#1b8fe0" strokeWidth="4" />
      <circle cx="30" cy="20" r="5" fill="#555" />
    </>
  ),
  offsetPlane: (
    <>
      <path d="M6 30L22 6H54L34 26V88L28 94H6Z" fill="#dcdcdc" stroke="#555" strokeWidth="3" />
      <path d="M34 28L60 6V66L34 92Z" fill="#4dbb77" />
      <path d="M68 28L94 6V66L68 92Z" fill="#ea9a65" />
    </>
  ),
  midPlane: (
    <>
      <path d="M22 26L4 76H70L60 26Z" fill="#dcdcdc" stroke="#555" strokeWidth="3" />
      <path d="M22 26L4 76H14L30 26ZM78 20L94 60L86 78L68 30Z" fill="#4dbb77" />
      <path d="M36 28L62 6V68L36 92Z" fill="#ea9a65" fillOpacity="0.9" />
    </>
  ),
  measure: (
    <>
      <path d="M8 26V50M88 26V50M10 40H86" stroke="#444" strokeWidth="3" />
      <path d="M10 40L22 34V46ZM86 40L74 34V46Z" fill="#444" />
      <path d="M6 56H90V76H6Z" fill="#f5a31a" />
      <path d="M16 56V64M26 56V64M36 56V64M46 56V66M56 56V64M66 56V64M76 56V64" stroke="#5a3c00" strokeWidth="3" />
    </>
  ),
  insert: (
    <>
      <path d="M18 30L30 8H92L78 20V88L92 72V8" fill="#f4f4f4" stroke="#444" strokeWidth="3" />
      <path d="M18 28L28 16H78V88H18Z" fill="#f8f8f8" stroke="#444" strokeWidth="3" />
      <path d="M4 78C4 58 14 54 28 54V42L50 62L28 80V70C18 68 10 70 4 78Z" fill="#333" />
    </>
  ),
  image: (
    <>
      <path d="M5 6H91V92H5Z" fill="#7cc2f4" />
      <circle cx="66" cy="30" r="9" fill="#fdf3b5" />
      <path d="M5 60C20 30 34 44 46 62C58 76 66 54 76 62L91 78V92H5Z" fill="#3a87c4" />
      <path d="M5 6H91V92H5Z" fill="none" stroke="#3a87c4" strokeWidth="3" />
    </>
  ),
};

function Group({ label, names, w, last }: { label: string; names: string[]; w: string; last?: boolean }) {
  return (
    <div className={`flex h-[43px] flex-col items-center ${w} ${last ? "" : "border-r border-[#dadada]"}`}>
      <div className="flex h-[29px] items-center">
        {names.map((n) =>
          n === "select" ? (
            <button key={n} aria-label="Select" className="-mt-px flex h-[31px] w-[31px] bg-[#0696d7]">
              <svg viewBox="0 0 114 114" className="size-full" aria-hidden="true">
                <path d="M10 10H94V74H10Z" fill="none" stroke="#8dec5a" strokeWidth="4" strokeDasharray="14 7" />
                <path d="M72 54L104 88L90 88L98 104L90 108L82 92L74 100Z" fill="#fff" />
              </svg>
            </button>
          ) : (
            <button key={n} aria-label={n} className="flex w-[35px] justify-center">
              <R>{fusion[n]}</R>
            </button>
          ),
        )}
      </div>
      <button className="flex flex-1 items-center gap-[3px] pt-1 text-[10px] leading-none">
        {label}
        <Caret />
      </button>
    </div>
  );
}

const Ti = ({ children, w }: Kids & { w: string }) => (
  <button aria-label="Tool" className={`flex h-full items-center justify-center ${w}`}>
    {children}
  </button>
);
const S = ({ d, f = "#666", c = "size-3" }: { d: string; f?: string; c?: string }) => (
  <svg viewBox="0 0 14 14" className={c} aria-hidden="true">
    <path d={d} fill={f} fillRule="evenodd" />
  </svg>
);

function FusionTitle() {
  return (
    <header className="flex h-6 bg-[#cbcbcb]">
      <div className="flex w-[150px] items-center pl-px">
        <Ti w="w-[14px]">
          <S d="M0 0h4v4h-4zM5 0h4v4h-4zM10 0h4v4h-4zM0 5h4v4h-4zM5 5h4v4h-4zM10 5h4v4h-4zM0 10h4v4h-4zM5 10h4v4h-4zM10 10h4v4h-4z" />
        </Ti>
        <Ti w="ml-3 w-[14px]">
          <S d="M1 0H8V5H13V14H1ZM9 0L13 4H9Z" c="h-[13px] w-[13px]" />
        </Ti>
        <Ti w="w-3">
          <Caret c="#666" />
        </Ti>
        <Ti w="ml-[10px] w-[14px]">
          <S d="M0 0H14V14H2L0 12ZM3 1H11V6H3ZM4 9H10V14H8V10.500H6V14H4ZM8 2H10V5H8Z" />
        </Ti>
        <Ti w="ml-[14px] w-[12px]">
          <S d="M5 1L0 5L5 9V6C9 6 11 8 11 12H13C13 7 10 4 5 4Z" f="#999" />
        </Ti>
        <Ti w="w-[14px]">
          <Caret c="#999" />
        </Ti>
        <Ti w="ml-[5px] w-[12px]">
          <S d="M9 1L14 5L9 9V6C5 6 3 8 3 12H1C1 7 4 4 9 4Z" f="#999" />
        </Ti>
        <Ti w="w-[14px]">
          <Caret c="#999" />
        </Ti>
      </div>
      <div className="mt-[2px] flex flex-1 items-center rounded-t-[3px] bg-[#f1f1f1] text-[11px] leading-none text-[#3c3c3c]">
        <div className="flex flex-1 items-center justify-center gap-1">
          <svg viewBox="0 0 44 48" className="h-[13px] w-3" aria-hidden="true">
            <path d="M22 0L44 12L22 24L0 12Z" fill="#fdbb8c" />
            <path d="M0 12L22 24V48L0 36Z" fill="#ff8a3c" />
            <path d="M44 12L22 24V48L44 36Z" fill="#f26a0e" />
          </svg>
          <span>Untitled</span>
        </div>
        <button aria-label="Close tab" className="mr-[5px]">
          <svg viewBox="0 0 8 8" className="size-2" aria-hidden="true">
            <path d="M1 1L7 7M7 1L1 7" stroke="#777" strokeWidth="1.400" />
          </svg>
        </button>
      </div>
      <div className="flex items-center pr-[10px]">
        <button aria-label="New tab" className="mt-[2px] ml-1 flex h-[22px] w-[22px] items-center justify-center rounded-t-[3px] bg-[#b9b9b9]">
          <svg viewBox="0 0 12 12" className="size-[10px]" aria-hidden="true">
            <path d="M6 0V12M0 6H12" stroke="#777" strokeWidth="2.500" />
          </svg>
        </button>
        <Ti w="ml-1 w-[26px]">
          <svg viewBox="0 0 48 48" className="size-[13px]" aria-hidden="true">
            <circle cx="24" cy="24" r="19" fill="none" stroke="#5d5d5d" strokeWidth="8" strokeDasharray="100 20" transform="rotate(-10 24 24)" />
            <path d="M12 36L22 26M20 18L32 30L40 20L28 8ZM30 16L44 2" stroke="#5d5d5d" strokeWidth="5" fill="#5d5d5d" />
          </svg>
        </Ti>
        <Ti w="w-[27px]">
          <svg viewBox="0 0 48 48" className="size-[13px]" aria-hidden="true">
            <circle cx="24" cy="24" r="22" fill="none" stroke="#5d5d5d" strokeWidth="3" />
            <circle cx="24" cy="24" r="17" fill="#5d5d5d" />
            <path d="M24 12V25H36" fill="none" stroke="#ccc" strokeWidth="4" />
          </svg>
        </Ti>
        <Ti w="w-[27px]">
          <svg viewBox="0 0 48 48" className="size-[13px]" aria-hidden="true">
            <path d="M20 4a4 4 0 0 1 8 0C38 8 38 18 38 28L44 38H4L10 28C10 18 10 8 20 4ZM18 42H30Q24 50 18 42Z" fill="#5d5d5d" />
          </svg>
        </Ti>
        <Ti w="w-[26px]">
          <span className="flex size-[13px] items-center justify-center rounded-full bg-[#5d5d5d] text-[10px] leading-none font-bold text-[#d0d0d0]">?</span>
        </Ti>
        <button aria-label="Account" className="ml-[10px] size-[19px] overflow-hidden rounded-full">
          <svg viewBox="0 0 72 72" aria-hidden="true">
            <path d="M0 0H72V72H0Z" fill="#94aed0" />
            <path d="M36 4C52 4 56 16 54 28C52 44 46 46 46 52L66 62V72H6V62L26 52C26 46 20 44 18 28C16 16 20 4 36 4Z" fill="#3d4d66" />
          </svg>
        </button>
      </div>
    </header>
  );
}

function Ribbon() {
  return (
    <div className="flex h-[68px] border-b-2 border-[#f6f6f6] bg-[#f1f1f1] text-[10px] leading-none text-[#3c3c3c]">
      <div className="flex w-full border-b border-[#d9d9d9]">
        <button className="mt-2 ml-1 flex h-[49px] w-[89px] items-center justify-center gap-1 rounded-[4px] border-2 border-[#e2e2e2] font-bold">
          DESIGN
          <Caret />
        </button>
        <div className="ml-[7px]">
          <div className="ml-[6px] flex h-5 gap-[18px]">
            <button className="border-b-[3px] border-[#0696d7] px-[10px] font-bold text-[#0696d7]">SOLID</button>
            {["SURFACE", "MESH", "SHEET METAL", "PLASTIC", "UTILITIES"].map((t) => (
              <button key={t} className="px-[10px] pb-[3px]">
                {t}
              </button>
            ))}
          </div>
          <div className="flex">
            <Group label="CREATE" names={["sketch", "extrude", "revolve", "pattern", "mirror"]} w="w-[177px]" />
            <Group label="AUTOMATE" names={["automate"]} w="w-[87px]" />
            <Group label="MODIFY" names={["presspull", "split", "fx"]} w="w-[112px]" />
            <Group label="ASSEMBLE" names={["assemble", "joint"]} w="w-[88px]" />
            <Group label="CONSTRUCT" names={["offsetPlane", "midPlane"]} w="w-[91px]" />
            <Group label="INSPECT" names={["measure"]} w="w-[72px]" />
            <Group label="INSERT" names={["insert", "image"]} w="w-[78px]" />
            <Group label="SELECT" names={["select"]} w="w-[68px]" last />
          </div>
        </div>
      </div>
    </div>
  );
}

const Grip = () => <div className="ml-[6px] h-[9px] w-[3px] border-x border-[#777]" />;

function Expander() {
  return (
    <button aria-label="Expand" className="mr-[6px] ml-7 flex">
      <svg viewBox="0 0 28 40" className="h-[11px] w-2" aria-hidden="true">
        <path d="M2 2H12L26 20L12 38H2Z" fill="#fff" stroke="#333" strokeWidth="3.500" />
      </svg>
    </button>
  );
}
const Folder = () => (
  <svg viewBox="0 0 48 40" className="h-[11px] w-[13px]" aria-hidden="true">
    <path d="M0 0H22V6H48V40H0Z" fill="#9d9d9d" />
    <path d="M0 9H22L26 5" fill="none" stroke="#f1f1f1" strokeWidth="2.500" />
  </svg>
);

function Browser() {
  return (
    <div className="text-[10px] leading-none text-[#3c3c3c]">
      <div className="mt-[3px] flex h-5 w-[239px] items-center border border-l-0 border-[#c9c9c9] bg-[#f1f1f1] pl-[2px]">
        <button aria-label="Collapse">
          <svg viewBox="0 0 30 18" className="h-[5px] w-2" aria-hidden="true">
            <path d="M15 0V18L0 9ZM30 0V18L15 9Z" fill="#333" />
          </svg>
        </button>
        <span className="ml-2 flex-1 text-[#6a6a6a]">BROWSER</span>
        <button aria-label="Minimise" className="flex size-[7px] items-center justify-center rounded-full bg-[#222]">
          <span className="h-px w-1 bg-white" />
        </button>
        <Grip />
      </div>
      <ul className="flex flex-col gap-[3px] pt-[5px]">
        <li className="flex h-4 items-center">
          <svg viewBox="0 0 34 34" className="mr-[6px] ml-3 size-[9px]" aria-hidden="true">
            <path d="M32 2V32H2Z" fill="#999" stroke="#333" strokeWidth="3" />
          </svg>
          <div className="flex h-full items-center bg-[#f1f1f1] pl-[3px]">
            <svg viewBox="0 0 48 32" className="h-2 w-3" aria-hidden="true">
              <path d="M0 16C12 -4 36 -4 48 16C36 36 12 36 0 16Z" fill="#9d9d9d" />
              <circle cx="24" cy="16" r="9" fill="none" stroke="#f1f1f1" strokeWidth="3" />
            </svg>
            <div className="ml-[5px] flex h-[13px] w-[85px] items-center bg-[#979797] pl-[2px] font-bold text-white">
              <svg viewBox="0 0 48 48" className="mr-[11px] size-[13px]" aria-hidden="true">
                <path d="M2 16Q2 12 6 8L12 2H46V34L36 46H2Z" fill="#f2f2f2" stroke="#444" strokeWidth="2" />
                <path d="M36 14H4M36 14V44M36 14L46 2" stroke="#aaa" strokeWidth="2" />
              </svg>
              (Unsaved)
            </div>
            <input type="radio" defaultChecked aria-label="Activate component" className="mr-[6px] ml-[3px] size-[10px] appearance-none rounded-full border border-[#333] bg-[radial-gradient(circle,#333_0_2px,#fff_2px)]" />
          </div>
        </li>
        <li className="flex h-4 items-center">
          <Expander />
          <div className="flex h-full items-center bg-[#f1f1f1] pr-[10px] pl-[2px]">
            <svg viewBox="0 0 48 48" className="mr-3 size-[13px]" aria-hidden="true">
              <circle cx="24" cy="24" r="19" fill="none" stroke="#9d9d9d" strokeWidth="10" strokeDasharray="8 6.900" />
              <circle cx="24" cy="24" r="12" fill="none" stroke="#9d9d9d" strokeWidth="9" />
            </svg>
            Document Settings
          </div>
        </li>
        <li className="flex h-4 items-center">
          <Expander />
          <div className="flex h-full items-center gap-3 bg-[#f1f1f1] pr-2 pl-[2px]">
            <Folder />
            Named Views
          </div>
        </li>
        <li className="flex h-4 items-center">
          <Expander />
          <div className="flex h-full items-center bg-[#f1f1f1] pr-2 pl-[2px]">
            <svg viewBox="0 0 48 36" className="mr-[7px] h-[10px] w-[13px]" aria-hidden="true">
              <path d="M2 18C12 2 36 2 46 18C36 34 12 34 2 18Z" fill="none" stroke="#9d9d9d" strokeWidth="3" />
              <circle cx="24" cy="18" r="8" fill="none" stroke="#9d9d9d" strokeWidth="3" />
              <path d="M6 2L42 34" stroke="#9d9d9d" strokeWidth="3" />
            </svg>
            <Folder />
            <span className="ml-3">Origin</span>
          </div>
        </li>
      </ul>
    </div>
  );
}

function ViewCube() {
  return (
    <svg viewBox="480 365 290 335" className="absolute top-[6px] right-[9px] h-[90px] w-[78px]" fontFamily="Liberation Sans, sans-serif" aria-label="View cube">
      <ellipse cx="622" cy="628" rx="105" ry="58" fill="url(#shade)" />
      <path d="M517 476L623 429L728 476L622 535Z" fill="#f7f7f7" stroke="#777" strokeWidth="2" />
      <path d="M517 476L622 535V658L530 590Z" fill="#ececee" stroke="#888" strokeWidth="2" />
      <path d="M728 476L622 535V658L717 590Z" fill="#e6e6e8" stroke="#888" strokeWidth="2" />
      <path d="M622 535V658" stroke="#555" strokeWidth="3" />
      <g fontSize="24" fill="#74767e">
        <text transform="translate(598 474) rotate(22)">TOP</text>
        <text transform="translate(535 558) rotate(29)">FRONT</text>
        <text transform="translate(646 598) rotate(-30)">RIGHT</text>
      </g>
      <path d="M624 410V428" stroke="#5ee65e" strokeWidth="5" />
      <path d="M512 602L530 591" stroke="#5a5aff" strokeWidth="6" />
      <path d="M717 591L736 602" stroke="#ff6a6a" strokeWidth="6" />
      <g fontSize="38">
        <text x="611" y="401" fill="#7ef07e">Y</text>
        <text x="481" y="626" fill="#7a7aff">Z</text>
        <text x="739" y="626" fill="#ff7a7a">X</text>
      </g>
    </svg>
  );
}

const N = ({ children, w = "w-[20px]" }: Kids & { w?: string }) => (
  <button aria-label="Navigation tool" className={`flex justify-center ${w}`}>
    <svg viewBox="0 0 48 48" className="size-[15px]" fill="none" stroke="#444" strokeWidth="3" aria-hidden="true">
      {children}
    </svg>
  </button>
);
const Nd = () => (
  <button aria-label="More" className="flex w-2 justify-center">
    <Caret c="#222" />
  </button>
);

function NavBar() {
  return (
    <div className="flex h-[19px] items-center bg-[#f1f1f1]">
      <N w="w-[18px]">
        <ellipse cx="22" cy="24" rx="9" ry="21" />
        <ellipse cx="24" cy="24" rx="21" ry="8" />
        <path d="M22 19V29M17 24H27" stroke="#1b8fe0" />
      </N>
      <Nd />
      <N>
        <path d="M2 18H46V46H2ZM10 26H38V36H10Z" fill="#eee" />
        <path d="M6 16L12 4L20 10L30 2L40 6" />
      </N>
      <N>
        <path d="M14 46C8 34 2 30 3 22L12 30V10Q16 4 18 10V22V5Q22 0 25 5V22V6Q30 2 32 8V24L36 14Q42 12 42 18L36 46Z" fill="#fff" />
      </N>
      <N>
        <circle cx="16" cy="22" r="14" fill="#d9ecec" />
        <path d="M26 32L38 44" strokeWidth="7" stroke="#333" />
        <path d="M34 10H48M41 3V17M34 21H48" strokeWidth="2.500" />
      </N>
      <N>
        <path d="M2 2H46V46H2Z" strokeDasharray="6 4" strokeWidth="2" />
        <circle cx="22" cy="22" r="18" fill="#d9ecec" />
        <path d="M34 34L46 46" strokeWidth="7" stroke="#333" />
      </N>
      <Nd />
      <N w="w-[17px]">
        <path d="M2 4H46V36H2Z" fill="#dde" />
        <path d="M8 10H40V30H8Z" fill="#8db8ea" stroke="#3f6fae" />
        <path d="M24 36V44M14 45H34" />
      </N>
      <Nd />
      <N w="w-[17px]">
        <path d="M2 2H46V46H2ZM11 2V46M20 2V46M29 2V46M38 2V46M2 11H46M2 20H46M2 29H46M2 38H46" strokeWidth="2" fill="#fff" />
      </N>
      <Nd />
      <N w="w-[17px]">
        <path d="M2 6H46V42H2ZM24 6V42M2 24H46" fill="#a9c6ee" />
        <path d="M10 12H17V18H10ZM31 12H38V18H31ZM10 30H17V36H10ZM31 30H38V36H31Z" stroke="#4d79b5" strokeWidth="2" />
      </N>
      <Nd />
    </div>
  );
}

function Timeline() {
  const t = [
    "M1 0H3V14H1ZM14 0V14L4 7Z",
    "M10 0V14L0 7ZM11 4H13V10H11Z",
    "M1 0V14L13 7Z",
    "M4 0V14L14 7ZM1 4H3V10H1Z",
    "M11 0H13V14H11ZM0 0V14L10 7Z",
  ];
  return (
    <footer className="flex h-[39px] items-center border-t border-[#d4d4d4] bg-[#f1f1f1]">
      {t.map((d, i) => (
        <button key={i} aria-label={["First", "Back", "Play", "Forward", "Last"][i]} className="flex w-5 justify-center first:ml-[-1px]">
          <S d={d} f="#4a4a4a" />
        </button>
      ))}
      <svg viewBox="0 0 10 26" className="ml-[5px] h-[26px] w-[10px]" aria-label="Timeline marker">
        <path d="M0 0H10V4L6 8V26H4V8L0 4Z" fill="#666" />
      </svg>
      <button aria-label="Timeline settings" className="mr-[7px] ml-auto">
        <svg viewBox="0 0 48 48" className="size-[13px]" aria-hidden="true">
          <circle cx="24" cy="24" r="19" fill="none" stroke="#8a8a8a" strokeWidth="8" strokeDasharray="8 6.900" />
          <circle cx="24" cy="24" r="13" fill="none" stroke="#8a8a8a" strokeWidth="5" />
        </svg>
      </button>
    </footer>
  );
}

function Fusion() {
  return (
    <section className="flex min-w-0 flex-1 flex-col bg-white font-['Liberation_Sans',Arial,sans-serif]">
      <FusionTitle />
      <Ribbon />
      <main className="relative flex min-h-0 flex-1 flex-col justify-between">
        <Browser />
        <ViewCube />
        <div className="mb-[3px] grid grid-cols-[1fr_auto_1fr] items-end text-[10px] leading-none">
          <div className="flex h-5 w-[239px] items-center border-r border-b border-[#c9c9c9] bg-[#f1f1f1] pl-[18px] text-[#6a6a6a]">
            <span className="flex-1">COMMENTS</span>
            <button aria-label="Expand comments" className="flex">
              <svg viewBox="0 0 9 9" className="size-[8px]" aria-hidden="true">
                <circle cx="4.500" cy="4.500" r="4.500" fill="#222" />
                <path d="M4.500 2V7M2 4.500H7" stroke="#fff" strokeWidth="1.300" />
              </svg>
            </button>
            <Grip />
          </div>
          <NavBar />
        </div>
      </main>
      <Timeline />
    </section>
  );
}

export default function App() {
  return (
    <div className="flex h-screen overflow-hidden bg-black">
      <Gradients />
      <FreeCad />
      <div className="w-1 shrink-0 bg-black" />
      <Fusion />
    </div>
  );
}
